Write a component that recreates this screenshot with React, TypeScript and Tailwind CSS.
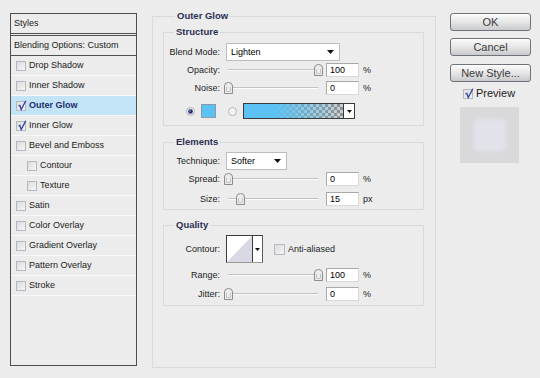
import React from "react";

const FONT = "font-['Liberation_Sans',Arial,sans-serif]";

function Check({ checked }: { checked?: boolean }) {
  return (
    <span className="relative block w-[10px] h-[10px] shrink-0 border border-[#b4b8c4] bg-linear-to-br from-[#dcdcdc] to-[#f6f6f6]">
      {checked && (
        <svg width="10" height="11" viewBox="0 0 10 11" className="absolute left-[0px] top-[-2px]">
          <polyline points="1.5,6 2.8,5.4 4.2,9.5 8.8,0.8" fill="none" stroke="#2c3fa6" strokeWidth="1.3" />
        </svg>
      )}
    </span>
  );
}

function Row({ label, indent, checked, active }: { label: string; indent?: boolean; checked?: boolean; active?: boolean }) {
  return (
    <div
      className={`h-[20px] border-b border-[#f8f8f8] flex items-center ${indent ? "pl-[16px]" : "pl-[5px]"} ${
        active ? "bg-[#c3e4f7]" : ""
      }`}
    >
      <Check checked={checked} />
      <span className={`ml-[3px] text-[9px] leading-none ${active ? "font-bold text-[#1d2c6e]" : "text-[#1a1a1a]"}`}>{label}</span>
    </div>
  );
}

function Arrow() {
  return (
    <svg width="7" height="4" viewBox="0 0 7 4">
      <polygon points="0,0 7,0 3.5,4" fill="#111" />
    </svg>
  );
}

function Thumb() {
  return (
    <svg width="9" height="12" viewBox="0 0 9 12">
      <path d="M0.5,11.5 V4 Q0.5,0.5 4.5,0.5 Q8.5,0.5 8.5,4 V11.5 Z" fill="#ececec" stroke="#8c8c8c" />
      <path d="M2.5,5 V9.5 H6.5 V5" fill="none" stroke="#c4c4c4" />
    </svg>
  );
}

function Label({ children }: { children: React.ReactNode }) {
  return <div className="w-[56px] shrink-0 text-right text-[9px] leading-none text-[#1c1c1c]">{children}</div>;
}

function SliderRow({ label, value, unit, thumbLeft }: { label: string; value: string; unit: string; thumbLeft: string }) {
  return (
    <div className="h-[14px] flex items-center">
      <Label>{label}</Label>
      <div className="relative ml-[4px] w-[98px] h-[14px]">
        <div className="absolute left-[4px] w-[90px] top-[6px] h-[2px] border-t border-[#c2c2c2] border-b border-b-[#fbfbfb]" />
        <div className={`absolute top-[1px] ${thumbLeft}`}>
          <Thumb />
        </div>
      </div>
      <div className="ml-[4px] w-[33px] h-[14px] bg-white border border-[#a9a9a9] border-b-[#d8d8d8] border-r-[#d8d8d8] flex items-center pl-[3px] text-[9px] leading-none text-black">
        {value}
      </div>
      <span className="ml-[4px] text-[9px] leading-none text-[#1c1c1c]">{unit}</span>
    </div>
  );
}

function Radio({ on }: { on?: boolean }) {
  return (
    <svg width="9" height="9" viewBox="0 0 9 9" className="shrink-0">
      <circle cx="4.5" cy="4.5" r="4" fill={on ? "#e8e8f0" : "#f4f4f4"} stroke="#b0b4c0" />
      {on && <circle cx="4.5" cy="4.5" r="2.3" fill="#262d6a" />}
      {on && <circle cx="4" cy="4" r="0.8" fill="#8a90c8" />}
    </svg>
  );
}

function Select({ w, text }: { w: string; text: string }) {
  return (
    <div className={`ml-[6px] ${w} h-[18px] bg-white border border-[#bdbdbd] flex items-center justify-between pl-[4px] pr-[5px]`}>
      <span className="text-[9px] leading-none text-black">{text}</span>
      <Arrow />
    </div>
  );
}

function Group({ title, children, className }: { title: string; children: React.ReactNode; className?: string }) {
  return (
    <fieldset className={`border border-[#dadada] ${className ?? ""}`}>
      <legend className="ml-[10px] px-[2px] text-[9.5px] leading-[12px] font-bold text-[#2b2f52]">{title}</legend>
      {children}
    </fieldset>
  );
}

function Button({ children }: { children: React.ReactNode }) {
  return (
    <div className="h-[18px] w-[81px] rounded-[3px] border border-[#6f7278] bg-linear-to-b from-[#fbfbfb] via-[#e6e6e6] to-[#c9cacd] shadow-[inset_0_1px_0_#ffffff] flex items-center justify-center text-[11px] leading-none text-[#3a3a3a]">
      {children}
    </div>
  );
}

export default function App() {
  return (
    <div className={`${FONT} w-[540px] h-[378px] bg-[#ececec] flex items-start overflow-hidden`}>
      {/* Styles list */}
      <div className="ml-[10px] mt-[13px] w-[127px] h-[353px] border border-[#4e4e4e] flex flex-col">
        <div className="h-[22px] border-b-[3px] border-double border-[#4e4e4e] flex items-center pl-[3px] text-[9px] leading-none text-[#1a1a1a]">
          Styles
        </div>
        <div className="h-[20px] border-b border-[#4e4e4e] flex items-center pl-[3px] text-[9px] leading-none text-[#1a1a1a]">
          Blending Options: Custom
        </div>
        <Row label="Drop Shadow" />
        <Row label="Inner Shadow" />
        <Row label="Outer Glow" checked active />
        <Row label="Inner Glow" checked />
        <Row label="Bevel and Emboss" />
        <Row label="Contour" indent />
        <Row label="Texture" indent />
        <Row label="Satin" />
        <Row label="Color Overlay" />
        <Row label="Gradient Overlay" />
        <Row label="Pattern Overlay" />
        <Row label="Stroke" />
      </div>

      {/* Outer Glow panel */}
      <fieldset className="ml-[15px] mt-[10px] w-[284px] h-[358px] border border-[#dadada] pl-[10px] pr-[11px]">
        <legend className="ml-[12px] px-[2px] text-[9.5px] leading-[12px] font-bold text-[#2b2f52]">Outer Glow</legend>

        <Group title="Structure" className="mt-[4px] pb-[6px]">
          <div className="mt-[5px] h-[18px] flex items-center">
            <Label>Blend Mode:</Label>
            <Select w="w-[114px]" text="Lighten" />
          </div>
          <div className="mt-[2px]">
            <SliderRow label="Opacity:" value="100" unit="%" thumbLeft="left-[90px]" />
          </div>
          <div className="mt-[4px]">
            <SliderRow label="Noise:" value="0" unit="%" thumbLeft="left-[0px]" />
          </div>
          <div className="mt-[8px] h-[16px] flex items-center">
            <div className="ml-[22px]">
              <Radio on />
            </div>
            <div className="ml-[6px] w-[15px] h-[14px] bg-[#5bc2f3] border border-[#8a9aa8]" />
            <div className="ml-[12px]">
              <Radio />
            </div>
            <div className="ml-[6px] h-[16px] flex border border-[#3a3a3a]">
              <div className="w-[99px] h-full [background-image:repeating-conic-gradient(#8e8e8e_0%_25%,#cfcfcf_0%_50%)] [background-size:6px_6px]">
                <div className="w-full h-full bg-linear-to-r from-[#5bc2f3] from-30% to-[#5bc2f300]" />
              </div>
              <div className="w-[11px] h-full bg-white border-l border-[#3a3a3a] flex items-center justify-center">
                <svg width="5" height="3" viewBox="0 0 5 3">
                  <polygon points="0,0 5,0 2.5,3" fill="#111" />
                </svg>
              </div>
            </div>
          </div>
        </Group>

        <Group title="Elements" className="mt-[10px] pb-[3px]">
          <div className="mt-[4px] h-[18px] flex items-center">
            <Label>Technique:</Label>
            <Select w="w-[61px]" text="Softer" />
          </div>
          <div className="mt-[2px]">
            <SliderRow label="Spread:" value="0" unit="%" thumbLeft="left-[0px]" />
          </div>
          <div className="mt-[6px]">
            <SliderRow label="Size:" value="15" unit="px" thumbLeft="left-[12px]" />
          </div>
        </Group>

        <Group title="Quality" className="mt-[9px] pb-[4px]">
          <div className="mt-[4px] h-[28px] flex items-center">
            <Label>Contour:</Label>
            <div className="ml-[6px] w-[37px] h-[28px] flex bg-white border border-[#3c3c3c] border-b-[#9a9a9a] border-r-[#5a5a5a]">
              <svg width="25" height="26" viewBox="0 0 25 26" className="block">
                <polygon points="0,26 25,0 25,26" fill="#d9d9e6" />
              </svg>
              <div className="w-[10px] h-full border-l border-[#3c3c3c] flex items-center justify-center">
                <svg width="5" height="3" viewBox="0 0 5 3">
                  <polygon points="0,0 5,0 2.5,3" fill="#111" />
                </svg>
              </div>
            </div>
            <div className="ml-[11px] flex items-center">
              <span className="block w-[11px] h-[11px] border border-[#b4b8c4] bg-linear-to-br from-[#dcdcdc] to-[#f6f6f6]" />
              <span className="ml-[3px] text-[9px] leading-none text-[#1c1c1c]">Anti-aliased</span>
            </div>
          </div>
          <div className="mt-[5px]">
            <SliderRow label="Range:" value="100" unit="%" thumbLeft="left-[90px]" />
          </div>
          <div className="mt-[5px]">
            <SliderRow label="Jitter:" value="0" unit="%" thumbLeft="left-[0px]" />
          </div>
        </Group>
      </fieldset>

      {/* Buttons */}
      <div className="ml-[14px] mt-[13px] w-[81px] flex flex-col">
        <Button>OK</Button>
        <div className="mt-[7px]">
          <Button>Cancel</Button>
        </div>
        <div className="mt-[8px]">
          <Button>New Style...</Button>
        </div>
        <div className="mt-[6px] ml-[13px] flex items-center">
          <Check checked />
          <span className="ml-[3px] text-[11px] leading-none text-[#222]">Preview</span>
        </div>
        <div className="mt-[8px] ml-[10px] w-[59px] h-[56px] bg-[#d9d9db] flex items-center justify-center">
          <div className="w-[26px] h-[26px] bg-[#e2e2ea] shadow-[0_0_5px_2px_#e5e5ef]" />
        </div>
      </div>
    </div>
  );
}
